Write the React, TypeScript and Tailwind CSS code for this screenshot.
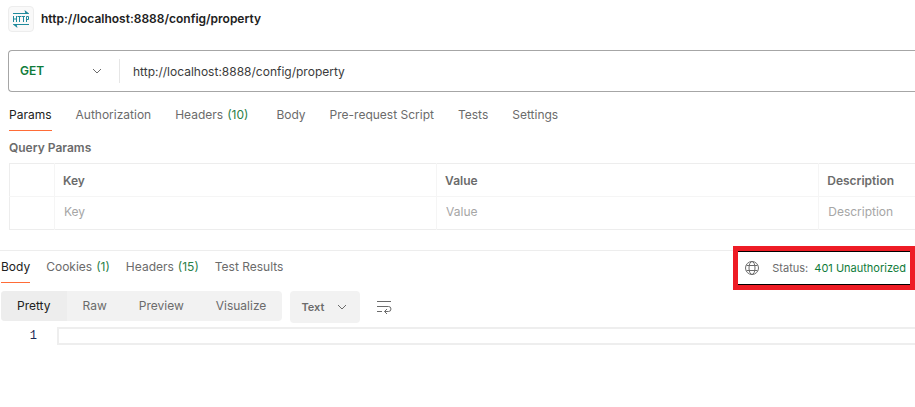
import { useState } from 'react';

type TabItem = { label: string; count?: number };

const requestTabs: TabItem[] = [
  { label: 'Params' },
  { label: 'Authorization' },
  { label: 'Headers', count: 10 },
  { label: 'Body' },
  { label: 'Pre-request Script' },
  { label: 'Tests' },
  { label: 'Settings' },
];

const responseTabs: TabItem[] = [
  { label: 'Body' },
  { label: 'Cookies', count: 1 },
  { label: 'Headers', count: 15 },
  { label: 'Test Results' },
];

const views = ['Pretty', 'Raw', 'Preview', 'Visualize'];

function HttpIcon() {
  return (
    <svg width="18" height="18" viewBox="0 0 18 18" fill="none" stroke="#1f8a9c" aria-hidden="true">
      <path d="M1 3.5H16" />
      <path d="M12.5 0L17 3.5V4H13.5Z" fill="#1f8a9c" stroke="none" />
      <path d="M2 14.5H17" />
      <path d="M5.5 18L1 14.5V14H4.5Z" fill="#1f8a9c" stroke="none" />
      <path d="M1.5 6V12M4.5 6V12M1.5 9H4.5M5.5 6.5H9M7.5 6V12M9.5 6.5H13M11.5 6V12M14.5 12V6.5H16.5V9.5H14.5" />
    </svg>
  );
}

function Chevron({ className }: { className: string }) {
  return (
    <svg
      width="10"
      height="6"
      viewBox="0 0 10 6"
      fill="none"
      stroke="#6b6b6b"
      className={`pointer-events-none ${className}`}
      aria-hidden="true"
    >
      <path d="M1 1L5 5L9 1" />
    </svg>
  );
}

function GlobeIcon() {
  return (
    <svg width="14" height="14" viewBox="0 0 14 14" fill="none" stroke="#6b6b6b" aria-hidden="true">
      <circle cx="7" cy="7" r="6.5" />
      <ellipse cx="7" cy="7" rx="3" ry="6.5" />
      <path d="M1.5 4.5H12.5M1.5 9.5H12.5" />
    </svg>
  );
}

function WrapIcon() {
  return (
    <svg width="16" height="14" viewBox="0 0 16 14" fill="none" stroke="#6b6b6b" aria-hidden="true">
      <path d="M1 1.5H15" />
      <path d="M1 6.5H12.5A2.5 2.5 0 0 1 12.5 11.5H8.5" />
      <path d="M1 11.5H6" />
      <path d="M11 9L8.5 11.5L11 14" />
    </svg>
  );
}

function Tabs({ items, active, onChange, className }: {
  items: TabItem[];
  active: string;
  onChange: (label: string) => void;
  className: string;
}) {
  return (
    <nav className={`flex ${className}`}>
      {items.map(({ label, count }) => (
        <button
          key={label}
          type="button"
          onClick={() => onChange(label)}
          className={`flex h-8 items-center border-b whitespace-nowrap ${
            active === label ? 'border-[#ff6c37] text-[#212121]' : 'border-transparent text-[#6b6b6b]'
          }`}
        >
          {label}
          {count !== undefined && <span className="ml-1 text-[#2a8048]">({count})</span>}
        </button>
      ))}
    </nav>
  );
}

export default function App() {
  const [url, setUrl] = useState('http://localhost:8888/config/property');
  const [requestTab, setRequestTab] = useState('Params');
  const [responseTab, setResponseTab] = useState('Body');
  const [view, setView] = useState('Pretty');

  return (
    <main className="min-h-screen overflow-hidden bg-white font-['Inter',sans-serif] text-[12px] leading-4 text-[#6b6b6b]">
      <header className="flex items-center gap-[7px] px-2 pt-1.5">
        <span className="flex size-[26px] items-center justify-center rounded border border-[#ededed] bg-[#f9f9f9]">
          <HttpIcon />
        </span>
        <h1 className="font-semibold text-[#212121]">http://localhost:8888/config/property</h1>
      </header>

      <form className="mt-[18px] ml-2 flex h-[42px] items-center rounded-l border border-r-0 border-[#a6a6a6]">
        <div className="relative flex w-[110px] items-center">
          <select
            aria-label="Method"
            className="w-full appearance-none bg-transparent pl-[11px] font-semibold text-[#0f7b3a] outline-none"
          >
            <option>GET</option>
            <option>POST</option>
          </select>
          <Chevron className="absolute right-[17px]" />
        </div>
        <input
          aria-label="Request URL"
          value={url}
          onChange={(e) => setUrl(e.target.value)}
          className="h-6 flex-1 border-l border-[#e6e6e6] pl-[13px] text-[#3b3b3b] outline-none"
        />
      </form>

      <Tabs
        items={requestTabs}
        active={requestTab}
        onChange={setRequestTab}
        className="mt-[7px] ml-[9px] gap-6 [&>:nth-child(3)]:pr-1"
      />

      <section className="ml-[9px]">
        <h2 className="mt-[9px] font-semibold">Query Params</h2>
        <table className="mt-[7px] w-full table-fixed border-collapse border border-r-0 border-[#ededed] text-left">
          <colgroup>
            <col className="w-[45px]" />
            <col className="w-[42.2%]" />
            <col className="w-[42.2%]" />
            <col />
          </colgroup>
          <thead>
            <tr className="h-[33px] border-b border-[#f5f5f5]">
              <th className="border-r border-[#f5f5f5]" />
              <th className="border-r border-[#f5f5f5] px-2 pt-px font-semibold">Key</th>
              <th className="border-r border-[#f5f5f5] px-2 pt-px font-semibold">Value</th>
              <th className="px-2 pt-px font-semibold">Description</th>
            </tr>
          </thead>
          <tbody>
            <tr className="h-[33px]">
              <td className="border-r border-[#f5f5f5]" />
              {['Key', 'Value', 'Description'].map((name) => (
                <td key={name} className="border-r border-[#f5f5f5] pb-0.5 pl-[9px] last:border-r-0">
                  <input
                    aria-label={name}
                    placeholder={name}
                    className="block w-full outline-none placeholder:text-[#a6a6a6]"
                  />
                </td>
              ))}
            </tr>
          </tbody>
        </table>
      </section>

      <section className="mt-5 border-t border-[#ededed] pl-px">
        <div className="relative flex justify-between">
          <Tabs items={responseTabs} active={responseTab} onChange={setResponseTab} className="gap-4" />
          <div className="absolute -top-[5px] right-0 border-[5px] border-[#ee1c25] bg-white">
            <div className="flex h-[34px] items-center border-y border-black pr-1 pl-[7px] text-[11px]">
              <GlobeIcon />
              <span className="ml-[13px]">Status:</span>
              <span className="ml-1.5 text-[#0f7b3a]">401 Unauthorized</span>
            </div>
          </div>
        </div>

        <div className="mt-2 flex items-start">
          <div className="flex overflow-hidden rounded bg-[#f2f2f2]">
            {views.map((name) => (
              <button
                key={name}
                type="button"
                onClick={() => setView(name)}
                className={`h-[30px] px-4 ${view === name ? 'bg-[#ededed] text-[#212121]' : ''}`}
              >
                {name}
              </button>
            ))}
          </div>
          <div className="relative ml-2 flex h-8 w-[70px] items-center rounded bg-[#f2f2f2]">
            <select
              aria-label="Response format"
              className="w-full appearance-none bg-transparent pl-[11px] text-[11px] font-semibold outline-none"
            >
              <option>Text</option>
              <option>JSON</option>
            </select>
            <Chevron className="absolute right-[13px]" />
          </div>
          <button type="button" aria-label="Wrap lines" className="ml-4 flex h-8 items-center">
            <WrapIcon />
          </button>
        </div>

        <div className="mt-1 flex items-center">
          <span className="w-[56px] pr-5 text-right font-['Liberation_Mono',monospace] text-[#1b2a55]">1</span>
          <div className="h-[18px] flex-1 border-2 border-r-0 border-[#eeeeee]" />
        </div>
      </section>
    </main>
  );
}
